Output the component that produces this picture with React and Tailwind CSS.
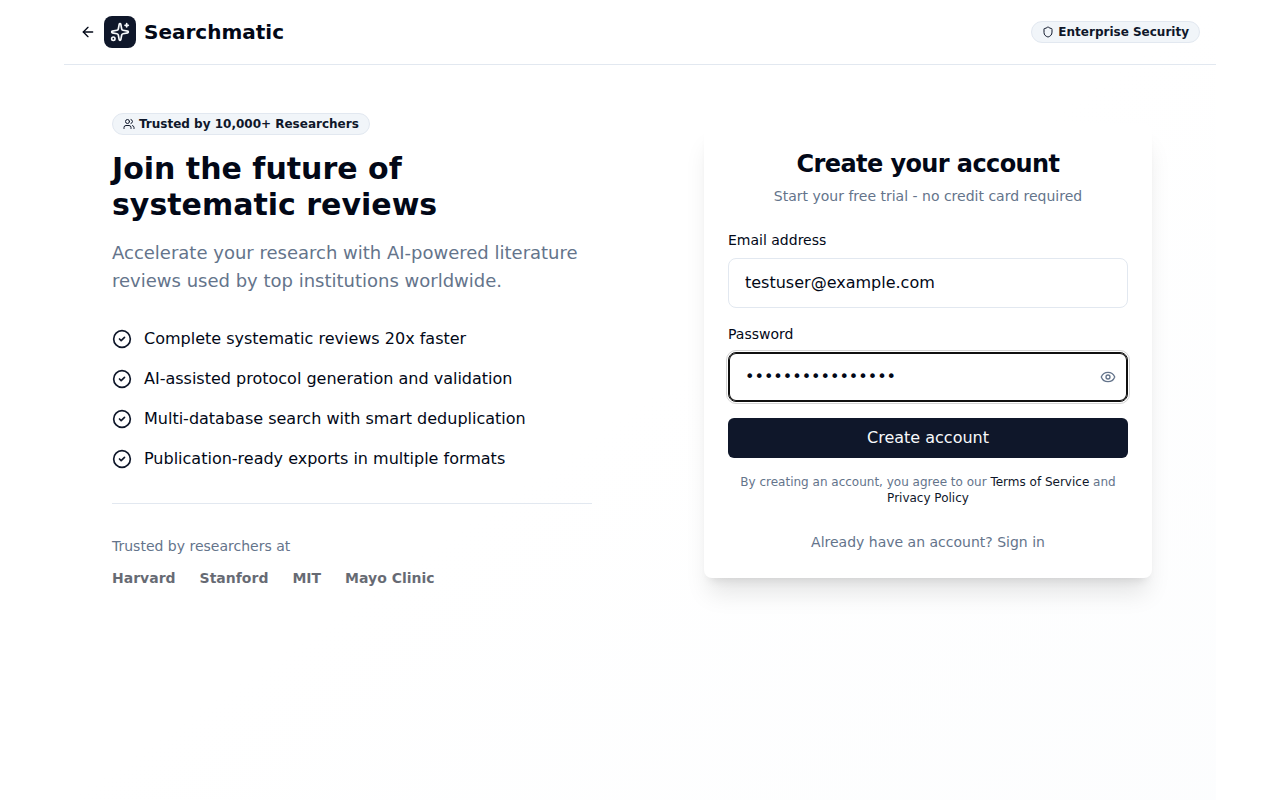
import { useState } from "react";
import { ArrowLeft, CircleCheck, Eye, Shield, Sparkles, Users } from "lucide-react";

const benefits = [
  "Complete systematic reviews 20x faster",
  "AI-assisted protocol generation and validation",
  "Multi-database search with smart deduplication",
  "Publication-ready exports in multiple formats",
];

const institutions = ["Harvard", "Stanford", "MIT", "Mayo Clinic"];

function Badge({ icon: Icon, children }) {
  return (
    <div className="inline-flex items-center gap-1 rounded-full border border-slate-200 bg-slate-100 px-2.5 py-0.5 text-xs font-semibold text-[#0f172a]">
      <Icon className="size-3" aria-hidden="true" />
      {children}
    </div>
  );
}

function Header() {
  return (
    <header className="flex items-center justify-between border-b border-slate-200 p-4">
      <a href="#home" className="flex items-center gap-2">
        <ArrowLeft className="size-4" aria-hidden="true" />
        <span className="flex size-8 items-center justify-center rounded-lg bg-[#0f172a] text-slate-50">
          <Sparkles className="size-5" aria-hidden="true" />
        </span>
        <span className="text-xl font-semibold">Searchmatic</span>
      </a>
      <Badge icon={Shield}>Enterprise Security</Badge>
    </header>
  );
}

function Pitch() {
  return (
    <section className="flex flex-col items-start">
      <Badge icon={Users}>Trusted by 10,000+ Researchers</Badge>
      <h1 className="mt-4 text-3xl font-bold">
        Join the future of <br />
        systematic reviews
      </h1>
      <p className="mt-4 text-lg leading-7 text-[#64748b]">
        Accelerate your research with AI-powered literature reviews used by top institutions worldwide.
      </p>
      <ul className="mt-8 flex flex-col gap-4">
        {benefits.map((text) => (
          <li key={text} className="flex items-center gap-3">
            <CircleCheck className="size-5 shrink-0 text-[#0f172a]" aria-hidden="true" />
            <span>{text}</span>
          </li>
        ))}
      </ul>
      <div className="mt-8 w-full border-t border-slate-200 pt-8">
        <p className="text-sm text-[#64748b]">Trusted by researchers at</p>
        <div className="mt-3 flex flex-wrap gap-6 text-sm font-semibold opacity-60">
          {institutions.map((name) => (
            <span key={name}>{name}</span>
          ))}
        </div>
      </div>
    </section>
  );
}

function SignUpCard() {
  const [email, setEmail] = useState("testuser@example.com");
  const [password, setPassword] = useState("SecurePass12345!");
  const [visible, setVisible] = useState(false);

  return (
    <section className="w-full max-w-md justify-self-center rounded-lg bg-white p-6 shadow-xl">
      <h2 className="text-center text-2xl font-semibold tracking-tight">Create your account</h2>
      <p className="mt-1.5 text-center text-sm text-[#64748b]">Start your free trial - no credit card required</p>
      <form className="mt-6 flex flex-col gap-4" onSubmit={(e) => e.preventDefault()}>
        <div className="flex flex-col gap-2">
          <label htmlFor="email" className="text-sm">Email address</label>
          <input
            id="email"
            type="email"
            value={email}
            onChange={(e) => setEmail(e.target.value)}
            className="w-full rounded-lg border border-slate-200 bg-white px-4 py-3 outline-none"
          />
        </div>
        <div className="flex flex-col gap-2">
          <label htmlFor="password" className="text-sm">Password</label>
          <div className="relative">
            <input
              id="password"
              type={visible ? "text" : "password"}
              value={password}
              onChange={(e) => setPassword(e.target.value)}
              className="w-full rounded-lg border border-[#101010] bg-white py-3 pr-12 pl-4 ring-1 ring-[#101010] outline-1 outline-offset-1 outline-neutral-300 ring-inset"
            />
            <button
              type="button"
              aria-label={visible ? "Hide password" : "Show password"}
              onClick={() => setVisible(!visible)}
              className="absolute inset-y-0 right-3 flex items-center text-[#64748b]"
            >
              <Eye className="size-4" aria-hidden="true" />
            </button>
          </div>
        </div>
        <button type="submit" className="h-10 w-full rounded-md bg-[#0f172a] text-slate-50">
          Create account
        </button>
        <p className="text-center text-xs text-[#64748b]">
          By creating an account, you agree to our{" "}
          <a href="#terms" className="text-[#0f172a]">Terms of Service</a> and{" "}
          <a href="#privacy" className="text-[#0f172a]">Privacy Policy</a>
        </p>
      </form>
      <div className="mt-6 text-center">
        <a href="#signin" className="text-sm leading-6 text-[#64748b]">Already have an account? Sign in</a>
      </div>
    </section>
  );
}

export default function App() {
  return (
    <div className="mx-auto min-h-screen max-w-6xl bg-linear-to-br/srgb from-white via-white to-[#f1f5f9]/20 font-['DejaVu_Sans',sans-serif] text-[#020817]">
      <Header />
      <main className="grid items-center gap-12 p-12 md:grid-cols-2 lg:gap-24">
        <Pitch />
        <SignUpCard />
      </main>
    </div>
  );
}
